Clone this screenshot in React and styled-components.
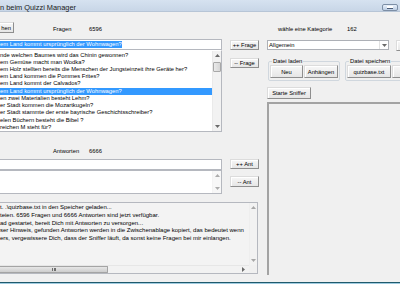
import styled, { createGlobalStyle } from "styled-components";

const GlobalStyle = createGlobalStyle`
  html, body { margin: 0; padding: 0; }
  body {
    width: 400px;
    height: 284px;
    overflow: hidden;
    background: #f0f0f0;
    font-family: "Liberation Sans", Arial, sans-serif;
    font-size: 5.8px;
    color: #000;
  }
  * { box-sizing: border-box; }
`;

const Window = styled.div`
  width: 400px;
  height: 284px;
  display: flex;
  flex-direction: column;
  overflow: hidden;
`;

const TitleBar = styled.div`
  height: 12px;
  flex: none;
  display: flex;
  align-items: flex-start;
  justify-content: space-between;
  background: linear-gradient(#d6e2f0, #c8d6e7);
  border-bottom: 1px solid #b7c5d6;
`;

const TitleText = styled.span`
  font-size: 7.4px;
  line-height: 8px;
  margin-top: 4px;
  color: #1a1a1a;
  white-space: nowrap;
`;

const MinButton = styled.div`
  width: 16px;
  height: 7px;
  margin: 4px 2px 0 0;
  border: 1px solid #7d8fa6;
  border-radius: 2px;
  background: linear-gradient(#e8f0fa, #bccde3);
  display: flex;
  align-items: center;
  justify-content: center;

  &::after {
    content: "";
    width: 6px;
    height: 2px;
    background: #fff;
    border: 1px solid #4a5d78;
    border-width: 0 0 1px 0;
  }
`;

const Client = styled.div`
  flex: none;
  height: 270px;
  display: flex;
  overflow: hidden;
`;

const Taskbar = styled.div`
  flex: none;
  height: 2px;
  background: linear-gradient(#1f5a6c 50%, #9fcbe0 50%);
`;

const LeftPane = styled.div`
  width: 261px;
  margin-left: -2px;
  flex: none;
  display: flex;
  flex-direction: column;
`;

const RightPane = styled.div`
  flex: 1;
  margin-left: 8px;
  display: flex;
  flex-direction: column;
  min-width: 0;
`;

const Row = styled.div`
  display: flex;
  align-items: flex-start;
  flex: none;
  height: ${({ $h }) => ($h ? `${$h}px` : "auto")};
  margin-top: ${({ $mt }) => $mt || 0}px;
`;

const Caption = styled.span`
  width: ${({ $w }) => $w}px;
  margin-left: ${({ $ml }) => $ml || 0}px;
  margin-top: ${({ $mt }) => $mt || 0}px;
  line-height: 7px;
  white-space: nowrap;
  flex: none;
`;

const Button = styled.div`
  flex: none;
  width: ${({ $w }) => $w}px;
  height: ${({ $h }) => $h}px;
  margin-top: ${({ $mt }) => $mt || 0}px;
  margin-left: ${({ $ml }) => $ml || 0}px;
  background: linear-gradient(#f7f7f7, #e6e6e6);
  border: 1px solid;
  border-color: #dcdcdc #8e8e8e #8e8e8e #dcdcdc;
  box-shadow: inset 1px 1px #fff;
  display: flex;
  align-items: center;
  justify-content: ${({ $end }) => ($end ? "flex-end" : "center")};
  padding-right: ${({ $end }) => ($end ? 2 : 0)}px;
  white-space: nowrap;
  overflow: hidden;
`;

const Column = styled.div`
  display: flex;
  flex-direction: column;
  flex: none;
  width: ${({ $w }) => $w}px;
  margin-left: ${({ $ml }) => $ml || 0}px;
`;

const TextBox = styled.div`
  height: ${({ $h }) => $h}px;
  background: #fff;
  border: 1px solid #b5b8bf;
  padding-left: 1px;
  display: flex;
  align-items: center;
  white-space: nowrap;
  overflow: hidden;
`;

const Selected = styled.span`
  background: #3399ff;
  color: #fff;
  line-height: 7px;
`;

const ListBox = styled.div`
  height: ${({ $h }) => $h}px;
  margin-top: ${({ $mt }) => $mt || 0}px;
  background: #fff;
  border: 1px solid #b5b8bf;
  border-top-color: ${({ $noTop }) => ($noTop ? "transparent" : "#b5b8bf")};
  display: flex;
  overflow: hidden;
`;

const Items = styled.div`
  flex: 1;
  min-width: 0;
  display: flex;
  flex-direction: column;
  padding-top: ${({ $pt }) => $pt || 0}px;
`;

const Item = styled.div`
  height: 7.5px;
  line-height: 7.5px;
  padding-left: 1px;
  white-space: nowrap;
  overflow: hidden;
  background: ${({ $sel }) => ($sel ? "#3399ff" : "transparent")};
  color: ${({ $sel }) => ($sel ? "#fff" : "#000")};
`;

const VScroll = styled.div`
  width: 9px;
  flex: none;
  display: flex;
  flex-direction: column;
  background: #f2f2f2;
  border-left: 1px solid #eaeaea;
  opacity: ${({ $faint }) => ($faint ? 0.55 : 1)};
`;

const Arrow = styled.div`
  flex: none;
  height: 9px;
  display: flex;
  align-items: center;
  justify-content: center;
`;

const Track = styled.div`
  flex: 1;
  display: flex;
  flex-direction: column;
`;

const Thumb = styled.div`
  flex: none;
  height: ${({ $h }) => $h}px;
  margin-top: ${({ $mt }) => $mt || 0}px;
  background: linear-gradient(90deg, #eaeaea, #d6d6d6);
  border: 1px solid #a8a8a8;
  border-radius: 1px;
`;

const LogBox = styled.div`
  width: 260px;
  height: 72px;
  margin-top: 8px;
  border: 1px solid #b5b8bf;
  border-left: none;
  background: #f3f3f3;
  display: grid;
  grid-template-columns: 1fr 8px;
  grid-template-rows: 1fr 8px;
`;

const LogText = styled.div`
  padding: 1px 0 0 2px;
  overflow: hidden;
  font-size: 6px;
`;

const LogLine = styled.div`
  height: 7.75px;
  line-height: 7.75px;
  white-space: nowrap;
`;

const LogVScroll = styled(VScroll)`
  width: 8px;
`;

const HScroll = styled.div`
  display: flex;
  align-items: stretch;
  background: #f2f2f2;
  border-top: 1px solid #e6e6e6;
`;

const HThumb = styled.div`
  width: 110px;
  flex: none;
  background: linear-gradient(#e6e6e6, #cdcdcd);
  border: 1px solid #a4a4a4;
  border-left: none;
  border-radius: 0 1px 1px 0;
  display: flex;
  align-items: center;
  justify-content: center;
`;

const Grip = styled.div`
  width: 4px;
  height: 3px;
  margin-left: 2px;
  background: repeating-linear-gradient(90deg, #6e6e6e 0 1px, transparent 1px 1.5px);
`;

const HTrack = styled.div`
  flex: 1;
  display: flex;
  justify-content: flex-end;
  align-items: center;
  padding-right: 4px;
`;

const Corner = styled.div`
  background: #f0f0f0;
`;

const Combo = styled.div`
  width: 122px;
  height: 10px;
  background: #fff;
  border: 1px solid #adb0b6;
  display: flex;
  align-items: center;
  padding-left: 1px;
  flex: none;
`;

const ComboText = styled.span`
  flex: 1;
  line-height: 7px;
`;

const ComboArrow = styled.div`
  width: 9px;
  height: 8px;
  display: flex;
  align-items: center;
  justify-content: center;
  border-left: 1px solid #e2e2e2;
`;

const Group = styled.fieldset`
  flex: none;
  margin: 0 0 0 ${({ $ml }) => $ml || 0}px;
  width: ${({ $w }) => $w}px;
  height: 23px;
  padding: 0 1px;
  border: 1px solid #d0d7de;
  border-radius: 2px;
  display: flex;
  align-items: flex-start;
  gap: 1px;

  legend {
    padding: 0 1px;
    margin-left: 2px;
    line-height: 6px;
    font-size: 5.8px;
  }
`;

const Panel = styled.div`
  flex: none;
  height: 173px;
  margin-top: 3px;
  border-left: 2px solid #a3a3a3;
  border-top: 2px solid #a3a3a3;
  background: #f0f0f0;
`;

const Tri = ({ dir }) => {
  const pts = {
    up: "0,3 2.5,0 5,3",
    down: "0,0 2.5,3 5,0",
    right: "0,0 3,2.5 0,5",
  }[dir];
  const w = dir === "right" ? 3 : 5;
  const h = dir === "right" ? 5 : 3;
  return (
    <svg width={w} height={h} viewBox={`0 0 ${w} ${h}`}>
      <polygon points={pts} fill="#6a6a6a" />
    </svg>
  );
};

const ScrollBar = ({ thumb, thumbTop, as: Comp = VScroll, faint }) => (
  <Comp $faint={faint}>
    <Arrow><Tri dir="up" /></Arrow>
    <Track>{thumb && <Thumb $h={thumb} $mt={thumbTop} />}</Track>
    <Arrow><Tri dir="down" /></Arrow>
  </Comp>
);

const questions = [
  "nde welchen Baumes wird das Chinin gewonnen?",
  "em Gemüse macht man Wodka?",
  "em Holz stellten bereits die Menschen der Jungsteinzeit ihre Geräte her?",
  "em Land kommen die Pommes Frites?",
  "em Land kommt der Calvados?",
  "em Land kommt ursprünglich der Wohnwagen?",
  "en zwei Materialien besteht Lehm?",
  "er Stadt kommen die Mozartkugeln?",
  "er Stadt stammte der erste bayrische Geschichtsschreiber?",
  "elen Büchern besteht die Bibel ?",
  "reichen M steht für?",
];

const logLines = [
  "t. .\\quizbase.txt in den Speicher geladen...",
  "teien. 6596 Fragen und 6666 Antworten sind jetzt verfügbar.",
  "ad gestartet, bereit Dich mit Antworten zu versorgen...",
  "ser Hinweis, gefunden Antworten werden in die Zwischenablage kopiert, das bedeutet wenn",
  "ers, vergewissere Dich, dass der Sniffer läuft, da sonst keine Fragen bei mir einlangen.",
];

export default function App() {
  return (
    <>
      <GlobalStyle />
      <Window>
        <TitleBar>
          <TitleText>n beim Quizzi Manager</TitleText>
          <MinButton />
        </TitleBar>
        <Client>
          <LeftPane>
            <Row $h={27}>
              <Button $w={16} $h={11} $mt={10} $end>hen</Button>
              <Caption $w={36} $ml={39} $mt={14}>Fragen</Caption>
              <Caption $w={30} $mt={14}>6596</Caption>
            </Row>
            <Row>
              <Column $w={224}>
                <TextBox $h={11}>
                  <Selected>em Land kommt ursprünglich der Wohnwagen?</Selected>
                </TextBox>
                <ListBox $h={82} $noTop>
                  <Items $pt={0.5}>
                    {questions.map((q, i) => (
                      <Item key={i} $sel={i === 5}>{q}</Item>
                    ))}
                  </Items>
                  <ScrollBar thumb={10} thumbTop={2} />
                </ListBox>
              </Column>
              <Column $w={29} $ml={8}>
                <Button $w={29} $h={10} $mt={1}>++ Frage</Button>
                <Button $w={29} $h={10} $mt={8}>-- Frage</Button>
              </Column>
            </Row>
            <Row $h={27}>
              <Caption $w={36} $ml={55} $mt={16}>Antworten</Caption>
              <Caption $w={30} $mt={16}>6666</Caption>
            </Row>
            <Row>
              <Column $w={224}>
                <TextBox $h={11} />
                <ListBox $h={24}>
                  <Items />
                  <ScrollBar faint />
                </ListBox>
              </Column>
              <Column $w={29} $ml={8}>
                <Button $w={29} $h={10}>++ Ant</Button>
                <Button $w={29} $h={11} $mt={7}>-- Ant</Button>
              </Column>
            </Row>
            <LogBox>
              <LogText>
                {logLines.map((l, i) => (
                  <LogLine key={i}>{l}</LogLine>
                ))}
              </LogText>
              <ScrollBar as={LogVScroll} faint />
              <HScroll>
                <HThumb><Grip /></HThumb>
                <HTrack><Tri dir="right" /></HTrack>
              </HScroll>
              <Corner />
            </LogBox>
          </LeftPane>
          <RightPane>
            <Row $mt={14}>
              <Caption $w={69} $ml={11}>wähle eine Kategorie</Caption>
              <Caption $w={30}>162</Caption>
            </Row>
            <Row $mt={7}>
              <Combo>
                <ComboText>Allgemein</ComboText>
                <ComboArrow><Tri dir="down" /></ComboArrow>
              </Combo>
              <Button $w={20} $h={11} $ml={7} />
            </Row>
            <Row $mt={7}>
              <Group $w={72} $ml={1}>
                <legend>Datei laden</legend>
                <Button $w={33} $h={13} $mt={1}>Neu</Button>
                <Button $w={34} $h={13} $mt={1}>Anhängen</Button>
              </Group>
              <Group $w={70} $ml={5}>
                <legend>Datei speichern</legend>
                <Button $w={44} $h={13} $mt={1}>quizbase.txt</Button>
                <Button $w={20} $h={13} $mt={1} />
              </Group>
            </Row>
            <Row $mt={6}>
              <Button $w={44} $h={12}>Starte Sniffer</Button>
            </Row>
            <Panel />
          </RightPane>
        </Client>
        <Taskbar />
      </Window>
    </>
  );
}
